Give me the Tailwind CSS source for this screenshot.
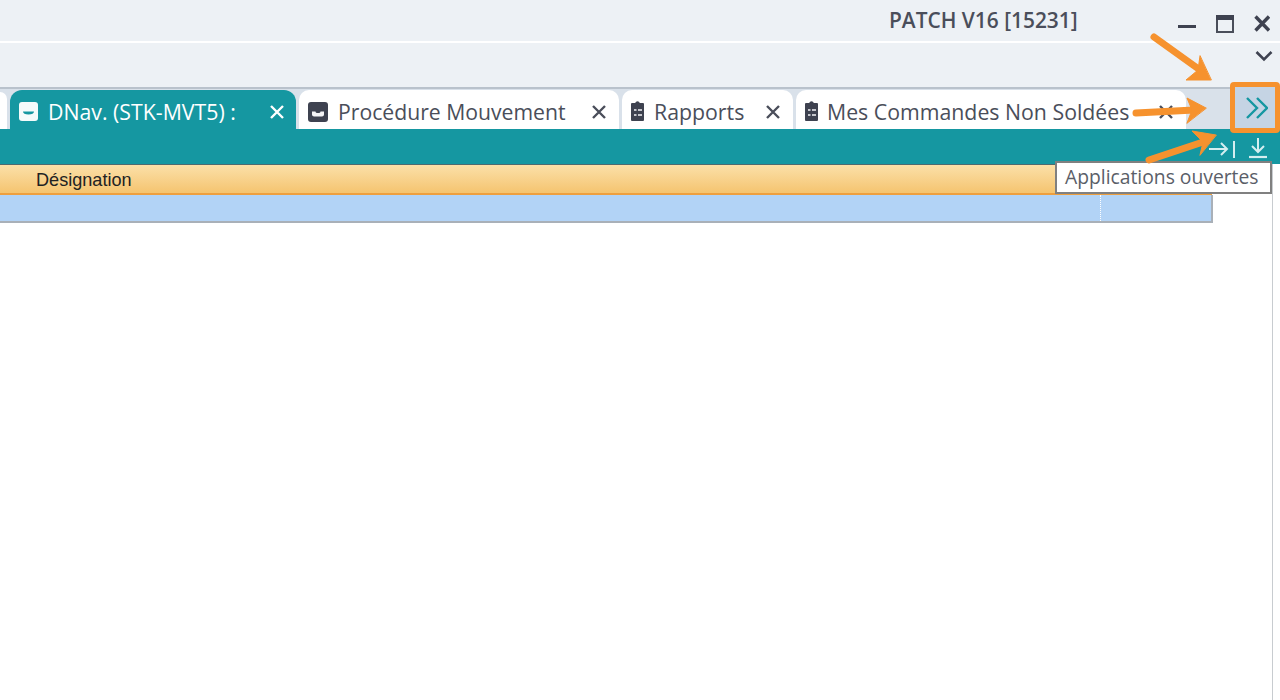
<!DOCTYPE html>
<html><head><meta charset="utf-8"><script src="https://cdn.jsdelivr.net/npm/@tailwindcss/browser@4"></script></head>
<body class="w-[1280px] h-[700px] overflow-hidden bg-white relative font-['Open_Sans',sans-serif]">
<div class="h-[41px] bg-[#edf1f5] flex items-start relative">
  <span class="absolute left-[889px] top-[6px] text-[20.9px] leading-[28px] font-semibold text-[#4a4e5a]">PATCH V16 [15231]</span>
  <svg class="absolute left-[1178px] top-[15px]" width="92" height="18" viewBox="0 0 92 18">
    <rect x="0" y="10" width="18" height="3" fill="#3e4250"/>
    <rect x="39" y="1" width="16" height="16" fill="none" stroke="#4a4e5a" stroke-width="2"/><rect x="38" y="0" width="18" height="5" fill="#3e4250"/>
    <path d="M77.500 1.500L91 15.500M91 1.500L77.500 15.500" stroke="#3e4250" stroke-width="3.400"/>
  </svg>
</div>
<div class="h-[2px] bg-white"></div>
<div class="h-[44px] bg-[#edf1f5] flex justify-end items-start pr-[7px] pt-[7px]">
  <svg width="18" height="12" viewBox="0 0 18 12"><path d="M1.500 2L9 9.500L16.500 2" fill="none" stroke="#3e4250" stroke-width="2.600"/></svg>
</div>
<div class="h-[42px] bg-[#d9e1ea] border-t-2 border-[#b9c2cc] flex items-end pl-[10px] gap-[3px] relative">
  <div class="absolute left-0 top-[3px] bottom-0 w-[7px] bg-white rounded-tr-[8px]"></div>
  <div class="w-[286px] h-[39px] bg-[#1597a1] rounded-t-[12px] flex items-center pt-[4px] pl-[9px] pr-[12px] text-white">
    <svg width="19" height="19" viewBox="0 0 19 19"><rect width="19" height="19" rx="3" fill="#f4fbfb"/><path d="M4 9.500h11c0 2-2 3-5.500 3s-5.500-1-5.500-3z" fill="#1597a1"/></svg>
    <span class="ml-[10px] text-[21.3px] leading-[26px] whitespace-nowrap">DNav. (STK-MVT5) :</span>
    <svg class="ml-auto" width="14" height="14" viewBox="0 0 14 14"><path d="M1 1L13 13M13 1L1 13" stroke="#fff" stroke-width="2.400"/></svg>
  </div>
  <div class="w-[320px] h-[39px] bg-white rounded-t-[10px] flex items-center pt-[4px] pl-[9px] pr-[13px] text-[#4a4e5a]">
    <svg width="20" height="20" viewBox="0 0 20 20"><rect width="20" height="20" rx="3" fill="#3e4250"/><path d="M4 9.500h3.500c0 1 1 1.500 2.500 1.500s2.500-.5 2.500-1.500h3.500v3c0 1-1 2-2 2h-8c-1 0-2-1-2-2z" fill="#f4f4f6"/></svg>
    <span class="ml-[10px] text-[21.2px] leading-[26px] whitespace-nowrap">Procédure Mouvement</span>
    <svg class="ml-auto" width="14" height="14" viewBox="0 0 14 14"><path d="M1 1L13 13M13 1L1 13" stroke="#4a4e5a" stroke-width="2.400"/></svg>
  </div>
  <div class="w-[171px] h-[39px] bg-white rounded-t-[10px] flex items-center pt-[4px] pl-[8px] pr-[13px] text-[#4a4e5a]">
    <svg class="-translate-y-[1px]" width="15" height="21" viewBox="0 0 15 21"><path d="M1 4a1 1 0 0 1 1-1h3.200a2.400 2.400 0 0 1 4.600 0H13a1 1 0 0 1 1 1v16a1 1 0 0 1-1 1H2a1 1 0 0 1-1-1z" fill="#3e4250"/><path d="M4 10h2.500M8 10h4M4 15h2.500M8 15h4" stroke="#f4f4f6" stroke-width="1.600"/></svg>
    <span class="ml-[9px] text-[21.3px] leading-[26px] whitespace-nowrap">Rapports</span>
    <svg class="ml-auto" width="14" height="14" viewBox="0 0 14 14"><path d="M1 1L13 13M13 1L1 13" stroke="#4a4e5a" stroke-width="2.400"/></svg>
  </div>
  <div class="w-[390px] h-[39px] bg-white rounded-t-[10px] flex items-center pt-[4px] pl-[8px] pr-[13px] text-[#4a4e5a]">
    <svg class="-translate-y-[1px]" width="15" height="21" viewBox="0 0 15 21"><path d="M1 4a1 1 0 0 1 1-1h3.200a2.400 2.400 0 0 1 4.600 0H13a1 1 0 0 1 1 1v16a1 1 0 0 1-1 1H2a1 1 0 0 1-1-1z" fill="#3e4250"/><path d="M4 10h2.500M8 10h4M4 15h2.500M8 15h4" stroke="#f4f4f6" stroke-width="1.600"/></svg>
    <span class="ml-[8px] text-[21.3px] leading-[26px] whitespace-nowrap">Mes Commandes Non Soldées</span>
    <svg class="ml-auto" width="14" height="14" viewBox="0 0 14 14"><path d="M1 1L13 13M13 1L1 13" stroke="#4a4e5a" stroke-width="2.400"/></svg>
  </div>
</div>
<div class="h-[35px] bg-[#1597a1] flex justify-end items-end pb-[5px] pr-[13px] gap-[14px]">
  <svg width="26" height="20" viewBox="0 0 26 20"><path d="M0 10H18M12 4L18 10L12 16" fill="none" stroke="#d5eef0" stroke-width="2"/><path d="M25 2V19" stroke="#d5eef0" stroke-width="2"/></svg>
  <svg width="18" height="22" viewBox="0 0 18 22"><path d="M9 1V15M3 9L9 15L15 9" fill="none" stroke="#d5eef0" stroke-width="2"/><path d="M0 20H18" stroke="#d5eef0" stroke-width="2.200"/></svg>
</div>
<div class="h-[31px] w-[1212px] bg-gradient-to-b from-[#fbe0a8] to-[#f5c46f] border-t border-[#4d6a70] border-b-2 border-b-[#ee9f3e] pl-[36px] text-[18.1px] leading-[31px] text-[#222] font-['Liberation_Sans',sans-serif]">Désignation</div>
<div class="h-[28px] w-[1213px] bg-[#b2d3f6] border-b-2 border-r-2 border-[#a9b0b8] flex justify-end">
  <div class="w-[111px] border-l border-dotted border-white"></div>
</div>
<div class="absolute left-[1272px] top-[164px] bottom-0 w-px bg-[#c8ccd0]"></div>
<div class="absolute left-[1055px] top-[161px] w-[217px] h-[33px] bg-white border-2 border-[#808080] text-[#5a5e68] text-[19.3px] leading-[28px] pl-[8px] whitespace-nowrap">Applications ouvertes</div>
<div class="absolute left-[1230px] top-[82px] w-[50px] h-[51px] border-[5px] border-[#f6922e] rounded-[4px] bg-[#c5d4e4] flex items-center justify-center">
  <svg class="translate-x-[2px]" width="22" height="22" viewBox="0 0 22 22"><path d="M1 1L11 11L1 21M11 1L21 11L11 21" fill="none" stroke="#1597a1" stroke-width="2.400"/></svg>
</div>
<svg class="absolute left-0 top-0 pointer-events-none" width="1280" height="700" viewBox="0 0 1280 700">
  <g fill="#f6922e" stroke="#f6922e" stroke-linecap="round" stroke-linejoin="round">
    <path d="M1154 37L1200 70" stroke-width="7" fill="none"/><path d="M1211 80L1186 80L1198 70L1200 56Z" stroke-width="1"/>
    <path d="M1136 113L1194 110" stroke-width="7" fill="none"/><path d="M1206 108L1187 98L1192 110L1187 123Z" stroke-width="1"/>
    <path d="M1149 160L1203 142" stroke-width="7" fill="none"/><path d="M1216 135L1192 131L1203 142L1200 155Z" stroke-width="1"/>
  </g>
</svg>
</body></html>
